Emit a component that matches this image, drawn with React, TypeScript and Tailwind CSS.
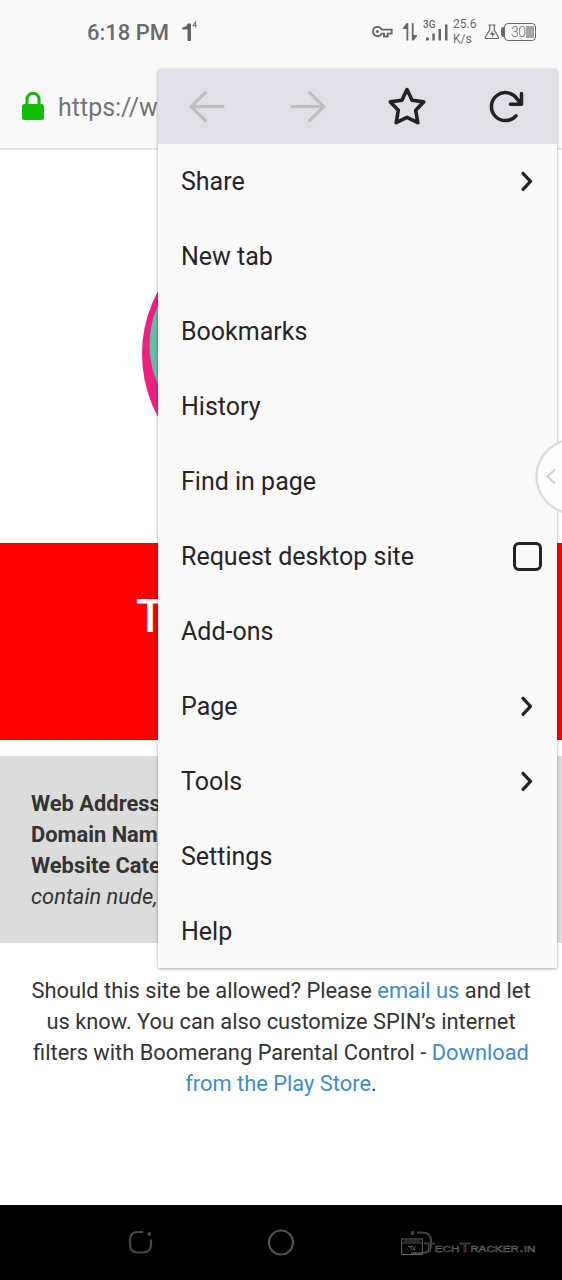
const menuItems: { label: string; kind?: "sub" | "check" }[] = [
  { label: "Share", kind: "sub" },
  { label: "New tab" },
  { label: "Bookmarks" },
  { label: "History" },
  { label: "Find in page" },
  { label: "Request desktop site", kind: "check" },
  { label: "Add-ons" },
  { label: "Page", kind: "sub" },
  { label: "Tools", kind: "sub" },
  { label: "Settings" },
  { label: "Help" },
];

function StatusBar() {
  return (
    <div className="flex h-16 items-center pl-[87px] text-[#6a6a6a]">
      <span className="w-[94px] whitespace-nowrap pt-px text-[22px] font-medium leading-8">6:18 PM</span>
      <svg className="h-6 w-5" viewBox="0 0 20 24" fill="none">
        <path d="M1.200 7.500Q6 7 6.500 3.500H10V21H6.500V9.500H1.200Z" fill="#666" />
        <path d="M14.500 7.500V2L12 5.700H16" stroke="#777" strokeWidth="1.100" />
      </svg>
      <svg className="ml-[171px] h-5 w-[22px]" viewBox="0 0 22 20" fill="none" stroke="#666">
        <path d="M5.500 4.900a4.600 4.600 0 1 0 4.200 6.700h2.300v2.900h3.700v-2.900h4v-4H9.700A4.600 4.600 0 0 0 5.500 4.900Z" strokeWidth="1.900" />
        <circle cx="5.400" cy="9.500" r="1.500" fill="#666" stroke="none" />
      </svg>
      <svg className="ml-[8px] h-5 w-4" viewBox="0 0 16 20" fill="#666">
        <path d="M4.500 1H6.300V18.500H4.500V7H1V5.900ZM9.800 1H11.600V13H15V14.200L11.600 18.500H9.800Z" />
      </svg>
      <div className="ml-[5px] flex h-[25px] w-[27px] flex-col">
        <span className="h-[9px] text-[10px] font-medium leading-[10px]">3G</span>
        <svg className="-mt-[5px] h-[21px] w-[27px]" viewBox="0 0 27 21" fill="#666">
          <path d="M3 13.500H5.800V16.500H3ZM9.300 9.500H11.800V16.500H9.300ZM15.500 5H18V16.500H15.500ZM22 .5H24.500V16.500H22Z" />
        </svg>
      </div>
      <div className="ml-[3px] flex w-[30px] flex-col text-[12px] leading-[15px]">
        <span>25.6</span>
        <span>K/s</span>
      </div>
      <svg className="ml-[1px] h-4 w-4" viewBox="0 0 16 16" fill="none" stroke="#666" strokeWidth="1.200">
        <path d="M4.500 1H11.500M5.700 1.500V6L1.300 13.300Q1 14.500 2.300 14.500H13.500Q15 14.500 14.500 13.300L10.300 6V1.500" />
        <path d="M8.800 6.500L5.700 10.500H8V13.500L11 9.300H8.500Z" fill="#666" stroke="none" />
      </svg>
      <div className="ml-[1px] h-[10px] w-[3px] rounded-l-[3px] bg-[#666]" />
      <div className="flex h-[18px] w-[32px] items-center rounded-[4px] border border-[#666] pl-[6px]">
        <span className="text-[14px] font-light leading-[14px] tracking-[-0.500px]">30</span>
        <span className="h-[12px] w-[8px] bg-[#a5a5a5]" />
      </div>
    </div>
  );
}

function AddressBar() {
  return (
    <div className="flex h-[86px] items-center border-b-2 border-[#e4e4e5] pl-[21px]">
      <svg className="h-[30px] w-6" viewBox="0 0 24 30">
        <path d="M6 14V8.500A6 6.300 0 0 1 18 8.500V14" fill="none" stroke="#12bc00" strokeWidth="3" />
        <rect x="1" y="13" width="22" height="16" rx="2.500" fill="#12bc00" />
      </svg>
      <span className="ml-[13px] pt-[3px] text-[25px] leading-8 text-[#737373]">https://w</span>
    </div>
  );
}

function Menu() {
  return (
    <div className="absolute left-[158px] top-[69px] flex w-[399px] flex-col bg-[#f9f9fa] shadow-[0_1px_3px_rgba(0,0,0,0.35)]">
      <div className="grid h-[75px] grid-cols-4 place-items-center bg-[#e0e0e6] pb-px text-[#222225]">
        <svg className="h-10 w-10" viewBox="0 0 40 40" fill="none" stroke="#bdbdc2" strokeWidth="3.200" strokeLinecap="round" strokeLinejoin="round">
          <path d="M35 20.700H3M17.500 6.700L3 20.700L17.500 34.500" />
        </svg>
        <svg className="h-10 w-10" viewBox="0 0 40 40" fill="none" stroke="#bdbdc2" strokeWidth="3.200" strokeLinecap="round" strokeLinejoin="round">
          <path d="M4 20.700H36M21.500 6.700L36 20.700L21.500 34.500" />
        </svg>
        <svg className="h-10 w-10" viewBox="0 0 40 40" fill="none" stroke="currentColor" strokeWidth="3.600" strokeLinejoin="round">
          <path d="M20 3.500L25.100 14.200L36.700 15.900L28.700 24.300L30.800 36.700L20 31.400L9.200 36.700L11.300 24.300L3.300 15.900L14.900 14.200Z" />
        </svg>
        <svg className="h-10 w-10" viewBox="0 0 40 40" fill="none" stroke="currentColor" strokeWidth="3.500" strokeLinecap="round" strokeLinejoin="round">
          <path d="M29 29.800A14 14 0 1 1 30.500 13.500L34 17.500M34.500 7.500V18.300H23.500" />
        </svg>
      </div>
      {menuItems.map(({ label, kind }) => (
        <div key={label} className="flex h-[75px] items-center justify-between pl-[23px] text-[25px] leading-8 text-[#252528] last:h-[74px]">
          <span className="pt-px">{label}</span>
          {kind === "sub" && (
            <svg className="mr-[22px] h-6 w-4" viewBox="0 0 16 24" fill="none" stroke="#222225" strokeWidth="3.200" strokeLinecap="round" strokeLinejoin="round">
              <path d="M4 3.300L11.500 11.300L4 19.300" />
            </svg>
          )}
          {kind === "check" && <span className="-mt-px mr-[15px] size-[29px] rounded-[6px] border-[3px] border-[#222225]" />}
        </div>
      ))}
    </div>
  );
}

function NavigationBar() {
  return (
    <div className="relative flex h-[75px] items-center bg-black pl-[127px]">
      <svg className="h-7 w-7" viewBox="0 0 28 28" fill="none" stroke="#484848" strokeWidth="2.200">
        <path d="M16 3H11Q3 3 3 11V15.500Q3 23.500 11 23.500H16Q24 23.500 24 15.500V10.500" />
        <circle cx="22.300" cy="5" r="2" fill="#484848" stroke="none" />
      </svg>
      <svg className="ml-[112px] h-7 w-7" viewBox="0 0 28 28" fill="none" stroke="#525252" strokeWidth="2.200">
        <circle cx="14" cy="13.500" r="12" />
      </svg>
      <svg className="ml-[110px] h-7 w-7" viewBox="0 0 28 28" fill="none" stroke="#424242" strokeWidth="2.200">
        <path d="M12 3.500H17Q26 3.500 26 12V15Q26 24 17 24H6" />
        <circle cx="7.500" cy="4" r="2" fill="#424242" stroke="none" />
      </svg>
      <div className="absolute left-[401px] top-[31px] flex items-center">
        <svg className="h-[18px] w-[22px]" viewBox="0 0 22 18" fill="none" stroke="#686868">
          <rect x=".7" y="1" width="20.600" height="15.500" />
          <path d="M1 5H21M3 3H19M7 8.500H12M9 8.500L11 12H14M12 9L14 12M15 8.500L12 11" strokeWidth=".8" />
        </svg>
        <span className="ml-[1px] origin-left scale-x-[1.300] whitespace-nowrap pt-[3px] font-['Liberation_Sans'] text-[13.500px] leading-[18px] text-black [font-variant:small-caps] [-webkit-text-stroke:0.500px_#686868]">TechTracker.in</span>
      </div>
    </div>
  );
}

export default function App() {
  return (
    <div className="relative flex h-[1280px] w-[562px] flex-col overflow-hidden bg-white font-[Roboto,sans-serif]">
      <header className="bg-[#f9f9fa]">
        <StatusBar />
        <AddressBar />
      </header>
      <main className="flex h-[1055px] flex-col text-[#333]">
        <div className="h-[393px]">
          <svg className="ml-[140px] mt-[60px] h-[290px] w-[282px]" viewBox="0 0 282 290">
            <circle cx="134" cy="144" r="132" fill="#ed2080" />
            <circle cx="107.500" cy="135" r="98" fill="#62bf9e" />
          </svg>
        </div>
        <div className="h-[197px] bg-[#fe0000] pl-[136px] pt-[46px] text-[46px] font-medium leading-[54px] text-white">T</div>
        <div className="mt-[16px] h-[187px] bg-[#dcdcdc] pl-[31px] pt-[31.500px] text-[21.870px] leading-[31.240px]">
          <p className="font-bold">Web Address</p>
          <p className="font-bold">Domain Nam</p>
          <p className="font-bold">Website Cate</p>
          <p className="italic">contain nude,</p>
        </div>
        <p className="mx-auto mt-[31.700px] whitespace-nowrap text-center text-[21.870px] leading-[31.240px]">
          Should this site be allowed? Please <span className="text-[#428bca]">email us</span> and let<br />
          us know. You can also customize SPIN’s internet<br />
          filters with Boomerang Parental Control - <span className="text-[#428bca]">Download</span><br />
          <span className="text-[#428bca]">from the Play Store</span>.
        </p>
      </main>
      <NavigationBar />
      <Menu />
      <svg className="absolute right-0 top-[436px] h-20 w-7" viewBox="0 0 28 80" fill="none">
        <circle cx="39" cy="40.500" r="36.500" fill="#fdfdfd" stroke="#dcdcdd" strokeWidth="2.600" />
        <path d="M21 33.500L13.500 40.500L21 47.500" stroke="#cfcfcf" strokeWidth="2" />
      </svg>
    </div>
  );
}
